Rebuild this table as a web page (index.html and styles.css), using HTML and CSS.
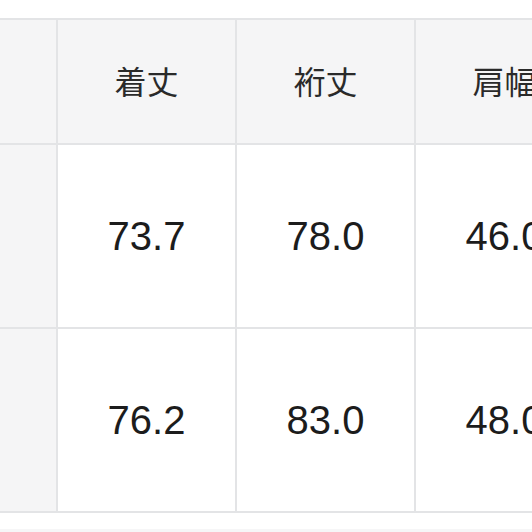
FILE: index.html
```html
<!DOCTYPE html>
<html lang="ja">
<head>
<meta charset="utf-8">
<link rel="stylesheet" href="styles.css">
</head>
<body>
<div class="viewport">
  <div class="sheet">
    <div class="cell head"></div>
    <div class="cell head jp">着丈</div>
    <div class="cell head jp">裄丈</div>
    <div class="cell head jp">肩幅</div>

    <div class="cell side"></div>
    <div class="cell num">73.7</div>
    <div class="cell num">78.0</div>
    <div class="cell num">46.0</div>

    <div class="cell side"></div>
    <div class="cell num">76.2</div>
    <div class="cell num">83.0</div>
    <div class="cell num">48.0</div>
  </div>
  <div class="footer-band"></div>
</div>
</body>
</html>
```

FILE: styles.css
```css
html, body {
  margin: 0;
  padding: 0;
  background: #ffffff;
  overflow: hidden;
}

.viewport {
  width: 532px;
  height: 532px;
  overflow: hidden;
  padding-top: 18px;
  box-sizing: border-box;
}

.sheet {
  display: grid;
  grid-template-columns: repeat(4, 177px);
  grid-template-rows: 123px 182px 182px;
  gap: 2px;
  padding: 2px;
  background: #e3e4e6;
  width: max-content;
  margin-left: -123px;
}

.cell {
  display: flex;
  align-items: center;
  justify-content: center;
  background: #ffffff;
  color: #1f1f1f;
}

.head, .side {
  background: #f5f5f6;
}

.jp {
  font-family: "Noto Sans CJK JP", "Noto Sans", sans-serif;
  font-size: 32px;
  color: #2a2a2a;
  padding-bottom: 3px;
}

.num {
  font-family: "Liberation Sans", Arial, sans-serif;
  font-size: 40px;
  color: #1c1c1c;
}

.footer-band {
  margin-top: 16px;
  height: 10px;
  background: #f6f6f7;
}
```
